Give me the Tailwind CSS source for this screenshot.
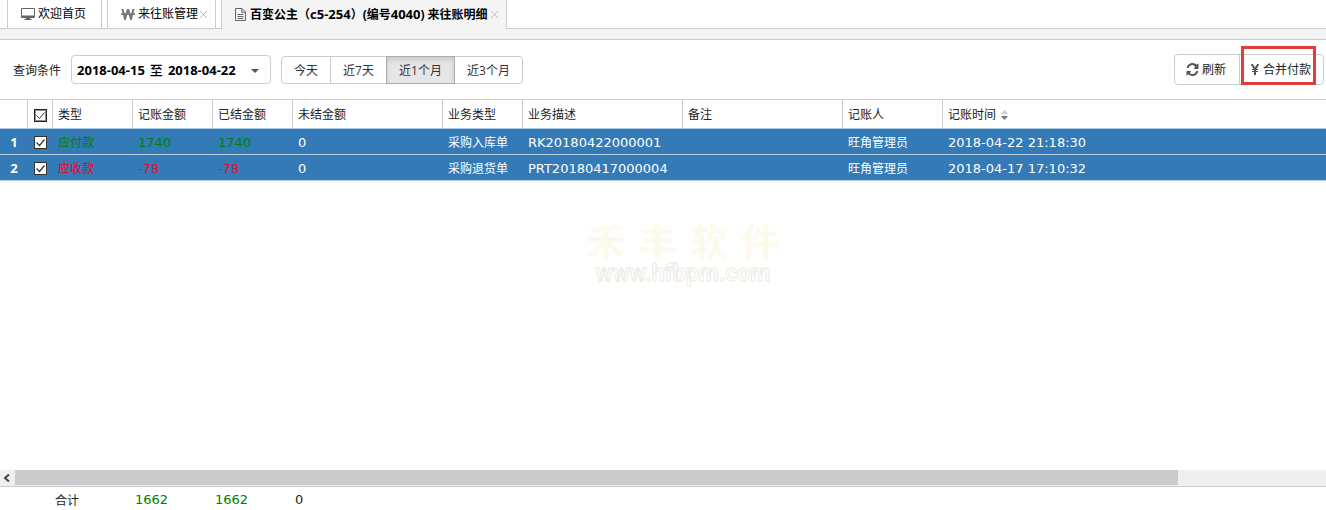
<!DOCTYPE html>
<html lang="zh-CN">
<head>
  <meta charset="UTF-8">
  <meta name="viewport" content="width=device-width, initial-scale=1.0">
  <title>来往账明细</title>
  <script src="https://cdn.jsdelivr.net/npm/@tailwindcss/browser@4"></script>
</head>

<body class="min-h-screen flex flex-col bg-white text-[#222] text-xs font-['Open_Sans','Noto_Sans_CJK_SC',sans-serif]">

  <!-- Tabs -->
  <nav class="flex h-10 flex-col bg-[#f4f4f4] border-b border-[#ccc] text-black whitespace-nowrap">
    <div class="flex h-[29px]">
      <div class="w-[7px] bg-white border-b border-[#ccc]"></div>
      <a href="#" class="flex w-[95px] items-center gap-[3px] bg-white border border-t-0 border-[#ccc] pl-[13px]">
        <svg class="w-[14px] h-[14px]" viewBox="0 0 14 14" fill="#666"><path fill-rule="evenodd" d="M1 1h12a1 1 0 0 1 1 1v8a1 1 0 0 1-1 1H9v1h1.500v1h-7v-1H5v-1H1a1 1 0 0 1-1-1V2a1 1 0 0 1 1-1zm0 1v6.500h12V2z"/></svg>
        <span>欢迎首页</span>
      </a>
      <div class="w-[5px] bg-white border-b border-[#ccc]"></div>
      <a href="#" class="flex w-[109px] items-center bg-white border border-t-0 border-[#ccc] pl-[13px]">
        <svg class="w-[14px] h-[11px] mr-[3px]" viewBox="0 0 14 11" fill="none" stroke="#777"><path stroke-width="2" d="M1.500 0l2.500 10L7 0l3 10 2.500-10"/><path stroke-width="1.600" d="M0 5h14"/></svg>
        <span>来往账管理</span>
        <svg class="w-[9px] h-[9px] ml-px" viewBox="0 0 9 9" stroke="#bbb" fill="none"><path d="M1 1l7 7M8 1L1 8"/></svg>
      </a>
      <div class="w-[5px] bg-white border-b border-[#ccc]"></div>
      <a href="#" aria-current="page" class="flex w-[286px] items-center border-x border-[#ccc] pl-[13px] font-bold">
        <svg class="w-[11px] h-[13px] mr-1" viewBox="0 0 11 13" fill="none" stroke="#666"><path d="M.5.5h6.500l3.500 3.500v8.500H.5zM6.800.5V4.300h3.700M2.500 6.500h6M2.500 8.500h6M2.500 10.500h6"/></svg>
        <span>百变公主（<span class="text-[13px]">c5-254</span>）(编号<span class="text-[13px]">4040</span>) 来往账明细</span>
        <svg class="w-[9px] h-[9px] ml-[2px]" viewBox="0 0 9 9" stroke="#bbb" fill="none"><path d="M1 1l7 7M8 1L1 8"/></svg>
      </a>
      <div class="flex-1 bg-white border-b border-[#ccc]"></div>
    </div>
  </nav>

  <!-- Toolbar -->
  <div class="flex h-[59px] items-center pl-[13px] pr-[2px] whitespace-nowrap">
    <span class="pt-[2px]">查询条件</span>
    <button type="button" class="ml-[10px] flex h-[29px] w-[200px] items-center justify-between rounded border border-[#ccc] pl-[5px] pr-[11px] pt-[2px] text-[13px] font-bold text-black">
      <span class="flex items-center gap-[5px]">2018-04-15 <span class="text-[13px] font-medium">至</span> 2018-04-22</span>
      <svg class="w-2 h-1" viewBox="0 0 8 4" fill="#555"><path d="M0 0h8L4 4z"/></svg>
    </button>
    <div class="ml-[10px] flex h-7 rounded border border-[#ccc] text-[#333]">
      <button type="button" class="w-[49px] pt-[2px] border-r border-[#ccc]">今天</button>
      <button type="button" class="w-[55px] pt-[2px]">近7天</button>
      <button type="button" class="-my-px w-[69px] pt-[2px] border border-[#adadad] bg-[#e6e6e6] shadow-[inset_0_3px_5px_rgba(0,0,0,0.125)]">近1个月</button>
      <button type="button" class="w-[67px] pt-[2px]">近3个月</button>
    </div>
    <div class="relative ml-auto flex h-[31px] rounded border border-[#ccc] text-[#222]">
      <button type="button" class="flex w-[65px] items-center gap-[3px] border-r border-[#ccc] pl-[11px]">
        <svg class="w-[13px] h-[13px]" viewBox="0 0 1536 1664" fill="#555"><path d="M1511 1056q0 5-1 7-64 268-268 434.500T764 1664q-146 0-282.500-55T238 1452l-129 129q-19 19-45 19t-45-19-19-45v-448q0-26 19-45t45-19h448q26 0 45 19t19 45-19 45l-137 137q71 66 161 102t187 36q134 0 250-65t186-179q11-17 53-117 8-23 30-23h192q13 0 22.500 9.500t9.500 22.500zm25-800v448q0 26-19 45t-45 19h-448q-26 0-45-19t-19-45 19-45l138-138Q969 256 768 256q-134 0-250 65T332 500q-11 17-53 117-8 23-30 23H50q-13 0-22.500-9.500T18 608v-7q65-268 270-434.500T768 0q146 0 284 55.500T1297 212l130-129q19-19 45-19t45 19 19 45z"/></svg>
        <span class="pt-px">刷新</span>
      </button>
      <button type="button" class="flex w-[83px] items-center gap-1 pl-[11px]">
        <svg class="w-2 h-[11px]" viewBox="0 0 8 11" fill="none" stroke="#555"><path stroke-width="2" d="M.7 0L4 5.500 7.300 0M4 5.500V11"/><path d="M1 5.500h6M1 7.500h6"/></svg>
        <span class="pt-px">合并付款</span>
      </button>
      <div class="absolute -top-[9px] right-[7px] h-[39px] w-[75px] border-3 border-[#e03c3c] pointer-events-none"></div>
    </div>
  </div>

  <!-- Detail list -->
  <main class="relative flex-1 overflow-hidden border-t border-[#ccc]">
    <table class="w-full table-fixed border-separate border-spacing-0 text-left whitespace-nowrap">
      <colgroup>
        <col class="w-[28px]"><col class="w-[25px]"><col class="w-[80px]"><col class="w-[80px]"><col class="w-[80px]"><col class="w-[150px]"><col class="w-[80px]"><col class="w-[160px]"><col class="w-[160px]"><col class="w-[100px]"><col>
      </colgroup>
      <thead class="text-[#222] [&_th]:h-[29px] [&_th]:border-b [&_th]:border-b-[#a9cbe8] [&_th]:border-r [&_th]:border-r-[#ccc] [&_th]:px-[5px] [&_th]:pt-[2px] [&_th]:pb-0 [&_th]:font-normal">
        <tr>
          <th></th>
          <th><label class="block"><input type="checkbox" checked aria-label="全选" class="peer sr-only"><svg class="block w-[13px] h-[13px] ml-px peer-checked:[&_.tick]:opacity-100" viewBox="0 0 13 13" fill="#fff"><rect x=".5" y=".5" width="12" height="12" stroke="#222"/><rect x="1.500" y="1.500" width="10" height="10" fill="none" stroke="#222" stroke-dasharray="1 1"/><path class="tick opacity-0" d="M2.500 6.500l3 3 5-6" fill="none" stroke="#333"/></svg></label></th>
          <th>类型</th>
          <th>记账金额</th>
          <th>已结金额</th>
          <th>未结金额</th>
          <th>业务类型</th>
          <th>业务描述</th>
          <th>备注</th>
          <th>记账人</th>
          <th class="border-r-0!"><span class="flex items-center gap-[5px]">记账时间 <svg class="w-[7px] h-[10px]" viewBox="0 0 7 10"><path fill="#ccc" d="M0 4h7L3.500 0z"/><path fill="#777" d="M0 6h7l-3.500 4z"/></svg></span></th>
        </tr>
      </thead>
      <tbody class="bg-[#337ab7] text-white [&_td]:h-[26px] [&_td]:border-b [&_td]:border-[#b9d0e4] [&_td]:px-[5px] [&_td]:pt-[2px] [&_td]:pb-0">
        <tr>
          <td class="text-center text-[13px] font-bold">1</td>
          <td><label class="block"><input type="checkbox" checked aria-label="选择第1行" class="peer sr-only"><svg class="block w-[13px] h-[13px] ml-px peer-checked:[&_.tick]:opacity-100" viewBox="0 0 13 13" fill="#fff"><rect x=".5" y=".5" width="12" height="12" stroke="#333"/><path class="tick opacity-0" d="M2.500 6.500l3 3 5-6" fill="none" stroke="#333" stroke-width="1.200"/></svg></label></td>
          <td class="text-[#008000]">应付款</td>
          <td class="text-[13px] font-['DejaVu_Sans'] text-[#008000]">1740</td>
          <td class="text-[13px] font-['DejaVu_Sans'] text-[#008000]">1740</td>
          <td class="text-[13px] font-['DejaVu_Sans']">0</td>
          <td>采购入库单</td>
          <td class="text-[13px] font-['DejaVu_Sans']">RK20180422000001</td>
          <td></td>
          <td>旺角管理员</td>
          <td class="text-[13px] font-['DejaVu_Sans']">2018-04-22 21:18:30</td>
        </tr>
        <tr>
          <td class="text-center text-[13px] font-bold">2</td>
          <td><label class="block"><input type="checkbox" checked aria-label="选择第2行" class="peer sr-only"><svg class="block w-[13px] h-[13px] ml-px peer-checked:[&_.tick]:opacity-100" viewBox="0 0 13 13" fill="#fff"><rect x=".5" y=".5" width="12" height="12" stroke="#333"/><path class="tick opacity-0" d="M2.500 6.500l3 3 5-6" fill="none" stroke="#333" stroke-width="1.200"/></svg></label></td>
          <td class="text-[#f00020]">应收款</td>
          <td class="text-[13px] font-['DejaVu_Sans'] text-[#e0102c]">-78</td>
          <td class="text-[13px] font-['DejaVu_Sans'] text-[#e0102c]">-78</td>
          <td class="text-[13px] font-['DejaVu_Sans']">0</td>
          <td>采购退货单</td>
          <td class="text-[13px] font-['DejaVu_Sans']">PRT20180417000004</td>
          <td></td>
          <td>旺角管理员</td>
          <td class="text-[13px] font-['DejaVu_Sans']">2018-04-17 17:10:32</td>
        </tr>
      </tbody>
    </table>

    <!-- Watermark -->
    <div class="pointer-events-none absolute left-1/2 top-[122px] flex w-[192px] -translate-x-[76px] flex-col items-center" aria-hidden="true">
      <div class="flex w-full justify-between text-[38px] leading-[38px] font-bold text-[#fdfaec]"><span>禾</span><span>丰</span><span>软</span><span>件</span></div>
      <div class="font-[Roboto] text-[23px] leading-7 font-bold text-white [-webkit-text-stroke:1px_#efebe4]">www.hfbpm.com</div>
    </div>
  </main>

  <!-- Horizontal scrollbar -->
  <div class="flex h-[17px] border-b border-[#ccc] bg-[#efefef]">
    <button type="button" aria-label="向左滚动" class="flex w-[15px] items-center justify-center pr-[3px]">
      <svg class="w-[7px] h-[8px]" viewBox="0 0 7 8" fill="none" stroke="#444" stroke-width="2"><path d="M6 .5L2 4l4 3.500"/></svg>
    </button>
    <div class="h-[15px] w-[1163px] bg-[#cbcbcb]"></div>
  </div>

  <!-- Totals -->
  <footer class="h-[23px]">
    <table class="table-fixed w-full text-left">
      <colgroup>
        <col class="w-[52px]"><col class="w-[80px]"><col class="w-[80px]"><col class="w-[80px]"><col>
      </colgroup>
      <tbody>
        <tr class="h-[26px] text-[13px] font-['DejaVu_Sans'] text-[#008000]">
          <td></td>
          <th scope="row" class="pl-[3px] text-xs font-normal font-['Noto_Sans_CJK_SC',sans-serif] text-[#222]">合计</th>
          <td class="pl-[3px]">1662</td>
          <td class="pl-[3px]">1662</td>
          <td class="pl-[3px] text-[#222]">0</td>
        </tr>
      </tbody>
    </table>
  </footer>

</body>
</html>
